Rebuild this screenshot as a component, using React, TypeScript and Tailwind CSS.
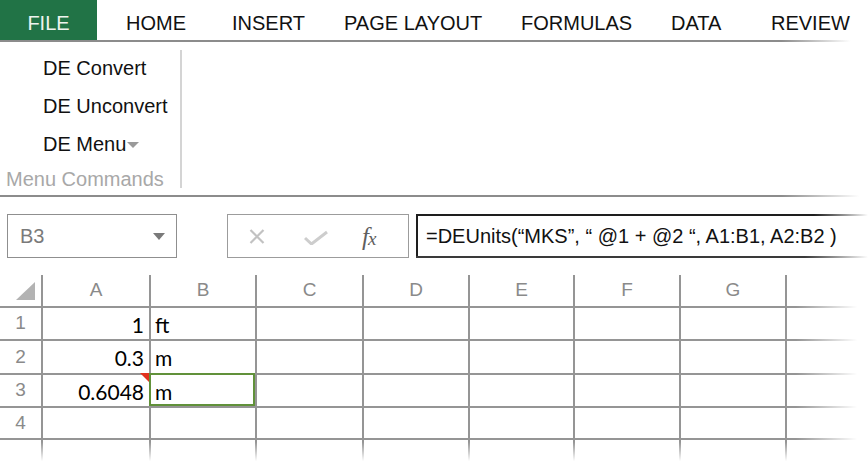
import React from "react";

const arial = { fontFamily: '"Liberation Sans", Arial, sans-serif' };

const cols = ["A", "B", "C", "D", "E", "F", "G", ""];

function Cell({ children, className = "" }: { children?: React.ReactNode; className?: string }) {
  return <div className={`relative bg-white ${className}`}>{children}</div>;
}

export default function App() {
  const rows: { n: string; a: string; b: string }[] = [
    { n: "1", a: "1", b: "ft" },
    { n: "2", a: "0.3", b: "m" },
    { n: "3", a: "0.6048", b: "m" },
    { n: "4", a: "", b: "" },
    { n: "", a: "", b: "" },
  ];
  return (
    <div
      className="w-[868px] h-[466px] bg-white overflow-hidden flex flex-col text-[#111]"
      style={arial}
    >
      {/* Tabs */}
      <div className="h-[40px] flex items-stretch text-[20px] leading-none">
        <div className="w-[97px] bg-[#217346] text-[#eef4ef] flex items-center justify-center pt-[6px]">
          FILE
        </div>
        <div className="flex items-center pt-[6px] pl-[29px]">
          <span className="w-[106px]">HOME</span>
          <span className="w-[112px]">INSERT</span>
          <span className="w-[177px]">PAGE LAYOUT</span>
          <span className="w-[150px]">FORMULAS</span>
          <span className="w-[100px]">DATA</span>
          <span>REVIEW</span>
        </div>
      </div>
      <div className="h-[2px] w-full bg-linear-to-r from-[#8c8c8c] from-90% to-white to-98%" />

      {/* Ribbon */}
      <div className="h-[153px] flex text-[20px] leading-none">
        <div className="w-[180px] flex flex-col pt-[7px]">
          <div className="h-[38px] flex items-center pl-[43px]">DE Convert</div>
          <div className="h-[38px] flex items-center pl-[43px]">DE Unconvert</div>
          <div className="h-[38px] flex items-center pl-[43px]">
            DE Menu
            <svg width="12" height="6" viewBox="0 0 12 6" className="ml-[1px] mt-[1px]">
              <path d="M0 0 H12 L6 6 Z" fill="#9a9a9a" />
            </svg>
          </div>
          <div className="h-[32px] flex items-center pl-[6px] text-[#a8a8a8]">Menu Commands</div>
        </div>
        <div className="w-[2px] h-[138px] mt-[8px] bg-[#d4d4d4]" />
      </div>
      <div className="h-[2px] w-full bg-linear-to-r from-[#8c8c8c] from-90% to-white to-99%" />

      {/* Formula bar */}
      <div className="h-[78px] flex items-center text-[20px] leading-none">
        <div className="ml-[7px] w-[170px] h-[44px] border border-[#8f8f8f] flex items-center justify-between pl-[12px] pr-[11px] text-[#7a7a7a]">
          <span>B3</span>
          <svg width="12" height="7" viewBox="0 0 12 7">
            <path d="M0 0 H12 L6 7 Z" fill="#7a7a7a" />
          </svg>
        </div>
        <div className="ml-[50px] w-[182px] h-[44px] border border-[#9c9c9c] flex items-center">
          <svg width="16" height="15" viewBox="0 0 16 15" className="ml-[21px]">
            <path d="M1.5 1 L14.5 14 M14.5 1 L1.5 14" stroke="#c2c2c2" strokeWidth="2.2" />
          </svg>
          <svg width="24" height="16" viewBox="0 0 24 16" className="ml-[39px] mt-[2px]">
            <path d="M1 9 L7.5 15 L23 3" stroke="#cdcdcd" strokeWidth="3" fill="none" />
          </svg>
          <span
            className="ml-[34px] text-[#5e5e5e] italic text-[25px] tracking-[-1px]"
            style={{ fontFamily: '"Liberation Serif", "Times New Roman", serif' }}
          >
            f<span className="text-[19px]">x</span>
          </span>
        </div>
        <div className="ml-[7px] flex-1 h-[44px] flex flex-col">
          <div className="h-[2px] bg-linear-to-r from-[#1e1e1e] from-88% to-white to-100%" />
          <div className="flex-1 border-l-2 border-[#1e1e1e] flex items-center pl-[8px] whitespace-nowrap text-[#111]">
            =DEUnits(“MKS”, “ @1 + @2 “, A1:B1, A2:B2 )
          </div>
          <div className="h-[2px] bg-linear-to-r from-[#3a3a3a] from-86% to-white to-100%" />
        </div>
      </div>

      {/* Grid */}
      <div className="relative flex-1">
        <div className="h-full grid grid-cols-[41px_106px_104px_105px_104px_103px_104px_104px_1fr] grid-rows-[31px_31px_32px_31px_30px_1fr] gap-[2px] bg-[#959595]">
          <Cell className="flex items-end justify-end pr-[6px] pb-[6px]">
            <svg width="19" height="18" viewBox="0 0 19 18">
              <path d="M19 0 V18 H0 Z" fill="#b3b3b3" />
            </svg>
          </Cell>
          {cols.map((c, i) => (
            <Cell key={i} className="flex items-center justify-center text-[19px] text-[#8a8a8a]">
              {c}
            </Cell>
          ))}
          {rows.map((r, ri) => (
            <React.Fragment key={ri}>
              <Cell className="flex items-center justify-center text-[19px] text-[#8a8a8a]">{r.n}</Cell>
              <Cell className="flex items-center justify-end pr-[5px] pt-[2px] text-[21px] text-black">
                <span style={{ fontFamily: 'Lato, "Open Sans", sans-serif' }}>{r.a}</span>
                {ri === 2 && (
                  <svg width="9" height="9" viewBox="0 0 9 9" className="absolute -top-[2px] right-0">
                    <path d="M0 0 H9 V9 Z" fill="#e2321e" />
                  </svg>
                )}
              </Cell>
              <Cell className="flex items-center pl-[4px] pt-[2px] text-[21px] text-black">
                <span style={{ fontFamily: 'Lato, "Open Sans", sans-serif' }}>{r.b}</span>
                {ri === 2 && (
                  <div className="absolute -left-[2px] -top-[2px] right-0 bottom-0 border-2 border-[#61913a]" />
                )}
              </Cell>
              {[0, 1, 2, 3, 4, 5].map((k) => (
                <Cell key={k} />
              ))}
            </React.Fragment>
          ))}
        </div>
        <div className="absolute top-0 bottom-0 right-0 w-[72px] bg-linear-to-r from-white/0 to-white to-85%" />
        <div className="absolute left-0 right-0 bottom-0 h-[24px] bg-linear-to-b from-white/0 to-white to-80%" />
      </div>
    </div>
  );
}
